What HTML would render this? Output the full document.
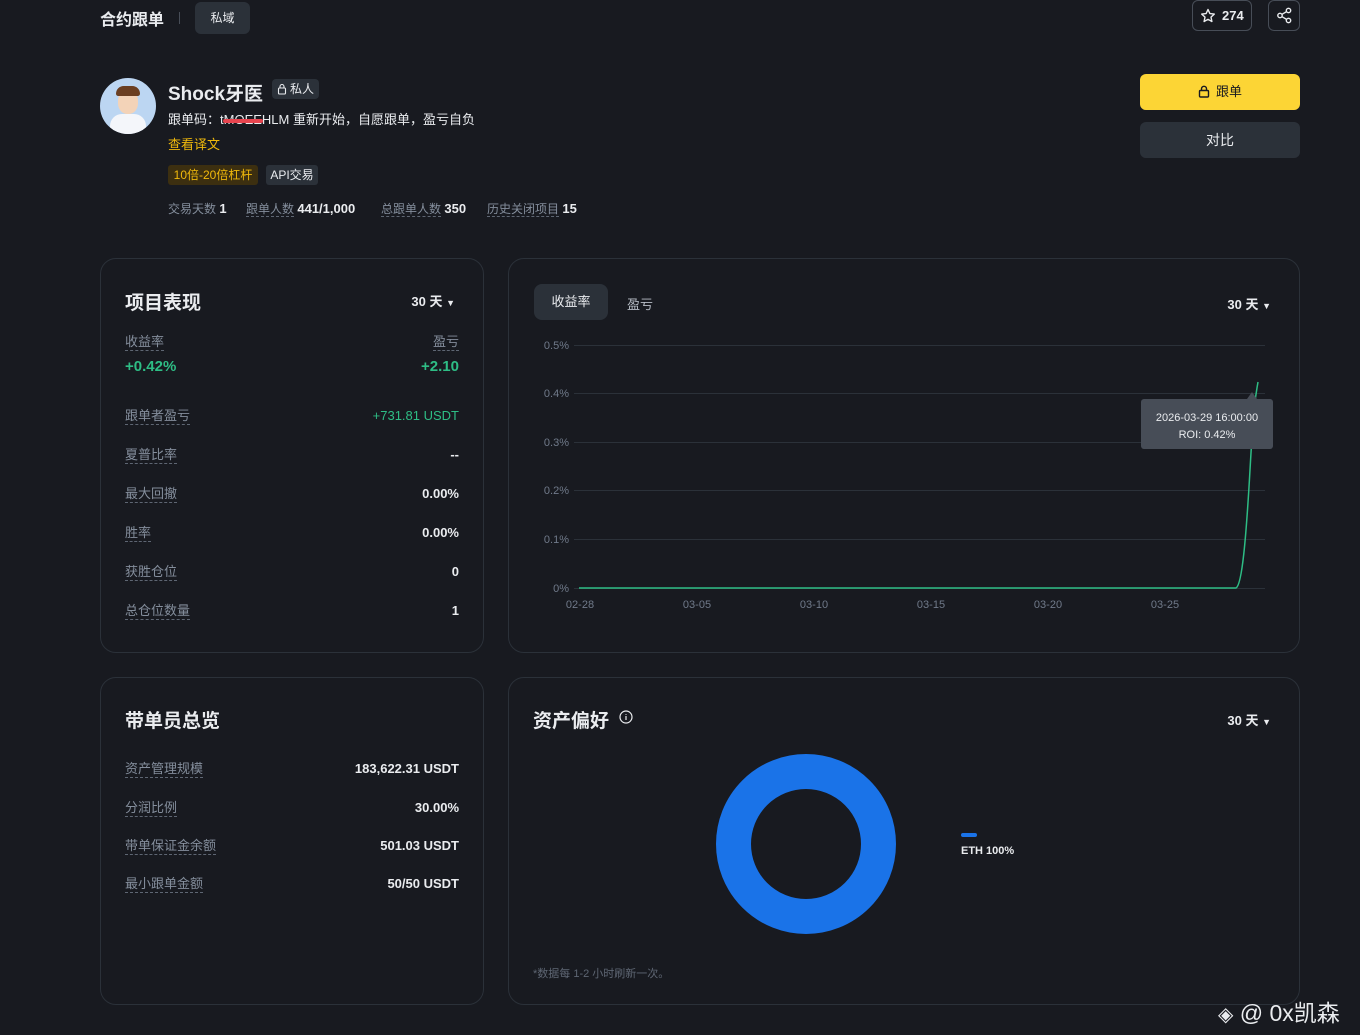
<!DOCTYPE html>
<html><head><meta charset="utf-8"><style>
*{margin:0;padding:0;box-sizing:border-box}
body{width:1360px;height:1035px;background:#181a20;color:#eaecef;font-family:"Liberation Sans","Noto Sans CJK SC",sans-serif;position:relative;overflow:hidden}
.a{position:absolute;white-space:nowrap}
.card{position:absolute;border:1px solid #2b3139;border-radius:16px;background:#181a20}
.dl{border-bottom:1px dashed #5e6673;color:#848e9c}
.g{color:#2ebd85}
.b{font-weight:bold}
.row{position:absolute;left:24px;right:24px;display:flex;justify-content:space-between;align-items:baseline;font-size:13px}
</style></head><body>
<div class="a b" style="left:100px;top:6px;font-size:16px">合约跟单</div>
<div class="a" style="left:179px;top:12px;width:1px;height:12px;background:#474d57"></div>
<div class="a" style="left:195px;top:2px;width:55px;height:32px;background:#2b3139;border-radius:6px;font-size:12px;text-align:center;line-height:32px">私域</div>
<div class="a" style="left:1192px;top:0;width:60px;height:31px;border:1px solid #474d57;border-radius:6px;font-size:13px;font-weight:bold;line-height:30px;padding-left:29px">274
<svg style="position:absolute;left:7px;top:7px" width="16" height="16" viewBox="0 0 16 16"><path d="M8 1.5l1.9 4.1 4.4.5-3.3 3 .9 4.4L8 11.3l-3.9 2.2.9-4.4-3.3-3 4.4-.5z" fill="none" stroke="#eaecef" stroke-width="1.4" stroke-linejoin="round"/></svg></div>
<div class="a" style="left:1268px;top:0;width:32px;height:31px;border:1px solid #474d57;border-radius:6px">
<svg style="position:absolute;left:7px;top:6px" width="17" height="17" viewBox="0 0 17 17" fill="none" stroke="#eaecef" stroke-width="1.4"><circle cx="12.5" cy="3.5" r="2.2"/><circle cx="4" cy="8.5" r="2.2"/><circle cx="12.5" cy="13.5" r="2.2"/><path d="M6 7.3l4.6-2.7M6 9.7l4.6 2.7"/></svg></div>

<div class="a" style="left:100px;top:78px;width:56px;height:56px;border-radius:50%;background:#bcd6f2;overflow:hidden">
<div style="position:absolute;left:18px;top:12px;width:20px;height:24px;background:#f3d3b8;border-radius:45%"></div>
<div style="position:absolute;left:16px;top:8px;width:24px;height:10px;background:#6b3f22;border-radius:10px 10px 3px 3px"></div>
<div style="position:absolute;left:10px;top:36px;width:36px;height:24px;background:#f4f6fa;border-radius:12px 12px 0 0"></div></div>
<div class="a b" style="left:168px;top:79px;font-size:19px">Shock牙医</div>
<div class="a" style="left:272px;top:79px;width:47px;height:20px;background:#2b3139;border-radius:4px;font-size:12px;line-height:20px;padding-left:18px">私人
<svg style="position:absolute;left:5px;top:4px" width="10" height="12" viewBox="0 0 10 12" fill="none" stroke="#eaecef" stroke-width="1.1"><rect x="1.5" y="5" width="7" height="6" rx="1"/><path d="M3 5V3.5a2 2 0 014 0V5"/></svg></div>
<div class="a" style="left:168px;top:109px;font-size:13px">跟单码：<span style="position:relative">tMOEEHLM<span style="position:absolute;left:3px;top:7px;width:40px;height:4px;background:#e8454f;border-radius:2px"></span></span> 重新开始，自愿跟单，盈亏自负</div>
<div class="a" style="left:168px;top:134px;font-size:13px;color:#f0b90b">查看译文</div>
<div class="a" style="left:168px;top:165px;height:20px;width:90px;text-align:center;background:#3c2f10;border-radius:3px;color:#f0b90b;font-size:12px;line-height:20px">10倍-20倍杠杆</div>
<div class="a" style="left:266px;top:165px;height:20px;width:52px;text-align:center;background:#2b3139;border-radius:3px;font-size:12px;line-height:20px">API交易</div>
<div class="a" style="left:168px;top:200px;font-size:12px;color:#848e9c">交易天数 <b style="color:#eaecef;font-size:13px">1</b></div>
<div class="a" style="left:246px;top:200px;font-size:12px"><span class="dl">跟单人数</span> <b style="font-size:13px">441/1,000</b></div>
<div class="a" style="left:381px;top:200px;font-size:12px"><span class="dl">总跟单人数</span> <b style="font-size:13px">350</b></div>
<div class="a" style="left:487px;top:200px;font-size:12px"><span class="dl">历史关闭项目</span> <b style="font-size:13px">15</b></div>

<div class="a" style="left:1140px;top:74px;width:160px;height:36px;background:#fcd535;border-radius:6px;color:#181a20;font-size:13px;text-align:center;line-height:36px">
<svg style="vertical-align:-2px;margin-right:6px" width="12" height="13" viewBox="0 0 12 13" fill="none" stroke="#181a20" stroke-width="1.4"><rect x="1.5" y="5.5" width="9" height="6.5" rx="1"/><path d="M3.5 5.5V3.8a2.5 2.5 0 015 0v1.7"/></svg>跟单</div>
<div class="a" style="left:1140px;top:122px;width:160px;height:36px;background:#2b3139;border-radius:6px;font-size:14px;text-align:center;line-height:36px">对比</div>

<div class="card" style="left:100px;top:258px;width:384px;height:395px">
<div class="a b" style="left:24px;top:29px;font-size:19px">项目表现</div>
<div class="a b" style="right:28px;top:32px;font-size:13px">30 天 <span style="font-size:9px">▼</span></div>
<div class="a dl" style="left:24px;top:72px;font-size:13px">收益率</div>
<div class="a dl" style="right:24px;top:72px;font-size:13px">盈亏</div>
<div class="a g b" style="left:24px;top:99px;font-size:15px">+0.42%</div>
<div class="a g b" style="right:24px;top:99px;font-size:15px">+2.10</div>
<div class="row" style="top:146px"><span class="dl">跟单者盈亏</span><span class="g">+731.81 USDT</span></div>
<div class="row" style="top:185px"><span class="dl">夏普比率</span><span class="b">--</span></div>
<div class="row" style="top:224px"><span class="dl">最大回撤</span><span class="b">0.00%</span></div>
<div class="row" style="top:263px"><span class="dl">胜率</span><span class="b">0.00%</span></div>
<div class="row" style="top:302px"><span class="dl">获胜仓位</span><span class="b">0</span></div>
<div class="row" style="top:341px"><span class="dl">总仓位数量</span><span class="b">1</span></div>
</div>

<div class="card" style="left:508px;top:258px;width:792px;height:395px">
<div class="a" style="left:25px;top:25px;width:74px;height:36px;background:#2b3139;border-radius:8px;font-size:13px;text-align:center;line-height:36px">收益率</div>
<div class="a" style="left:118px;top:35px;font-size:13px;color:#b7bdc6">盈亏</div>
<div class="a b" style="right:28px;top:35px;font-size:13px">30 天 <span style="font-size:9px">▼</span></div>
</div>
<svg class="a" style="left:0;top:0" width="1360" height="660">
<g stroke="#2b3139" stroke-width="1"><path d="M574 345.5H1265M574 393.5H1265M574 442.5H1265M574 490.5H1265M574 539.5H1265M574 588.5H1265"/></g>
<g fill="#707a8a" font-size="11" font-family="Liberation Sans,sans-serif" text-anchor="end"><text x="569" y="349">0.5%</text><text x="569" y="397">0.4%</text><text x="569" y="446">0.3%</text><text x="569" y="494">0.2%</text><text x="569" y="543">0.1%</text><text x="569" y="592">0%</text></g>
<g fill="#707a8a" font-size="11" font-family="Liberation Sans,sans-serif" text-anchor="middle"><text x="580" y="608">02-28</text><text x="697" y="608">03-05</text><text x="814" y="608">03-10</text><text x="931" y="608">03-15</text><text x="1048" y="608">03-20</text><text x="1165" y="608">03-25</text></g>
<path d="M579 588H1236C1242 585 1246 540 1250 470S1255 400 1258 382" fill="none" stroke="#2ebd85" stroke-width="1.5"/>
<path d="M1252 392l5 7h-10z" fill="#474d57"/>
<rect x="1141" y="399" width="132" height="50" rx="3" fill="#474d57"/>
<g fill="#eaecef" font-size="11" font-family="Liberation Sans,sans-serif" text-anchor="middle"><text x="1207" y="421">2026-03-29 16:00:00</text><text x="1207" y="438">ROI: 0.42%</text></g>
</svg>

<div class="card" style="left:100px;top:677px;width:384px;height:328px">
<div class="a b" style="left:24px;top:28px;font-size:19px">带单员总览</div>
<div class="row" style="top:80px"><span class="dl">资产管理规模</span><span class="b">183,622.31 USDT</span></div>
<div class="row" style="top:119px"><span class="dl">分润比例</span><span class="b">30.00%</span></div>
<div class="row" style="top:157px"><span class="dl">带单保证金余额</span><span class="b">501.03 USDT</span></div>
<div class="row" style="top:195px"><span class="dl">最小跟单金额</span><span class="b">50/50 USDT</span></div>
</div>

<div class="card" style="left:508px;top:677px;width:792px;height:328px">
<div class="a b" style="left:24px;top:28px;font-size:19px">资产偏好</div>
<svg class="a" style="left:110px;top:32px" width="14" height="14" viewBox="0 0 14 14" fill="none" stroke="#eaecef" stroke-width="1.2"><circle cx="7" cy="7" r="6"/><path d="M7 6v4M7 4v.8"/></svg>
<div class="a b" style="right:28px;top:32px;font-size:13px">30 天 <span style="font-size:9px">▼</span></div>
<svg class="a" style="left:206px;top:75px" width="182" height="182"><circle cx="91" cy="91" r="72.5" fill="none" stroke="#1a73e8" stroke-width="35"/></svg>
<div class="a" style="left:452px;top:155px;width:16px;height:4px;background:#1a73e8;border-radius:2px"></div>
<div class="a b" style="left:452px;top:167px;font-size:11px">ETH 100%</div>
<div class="a" style="left:24px;top:287px;font-size:11px;color:#5e6673">*数据每 1-2 小时刷新一次。</div>
</div>

<div class="a" style="left:1218px;top:994px;font-size:23px;color:#eaecef"><span style="font-size:20px">◈</span> @ 0x凯森</div>
</body></html>
